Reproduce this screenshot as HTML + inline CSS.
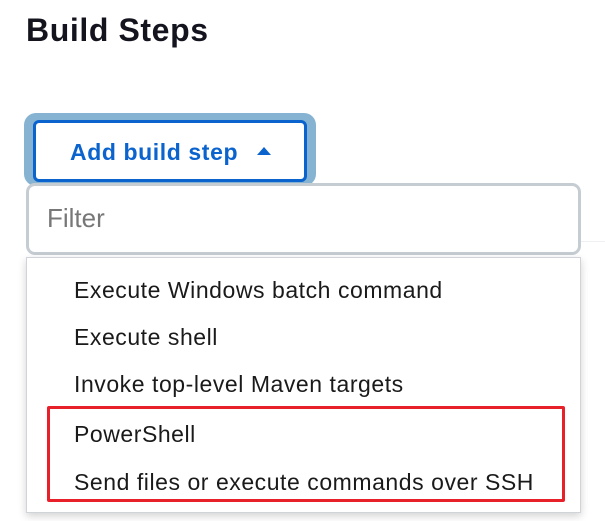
<!DOCTYPE html>
<html><head><style>
body{margin:0;width:605px;height:521px;background:#fff;font-family:"Liberation Sans",sans-serif;position:relative;overflow:hidden}
.a{position:absolute}
h1{position:absolute;left:26px;top:12px;margin:0;font-size:32px;letter-spacing:0.6px;font-weight:bold;color:#14141f}
.it{position:absolute;left:74px;font-size:23px;letter-spacing:0.55px;color:#1a1a1a;line-height:28px}
</style></head><body>
<h1>Build Steps</h1>
<div class="a" style="left:24px;top:113px;width:292px;height:73px;background:#86b3d1;border-radius:12px"></div>
<div class="a" style="left:33px;top:120px;width:268px;height:56px;background:#fff;border:3px solid #0b63ce;border-radius:6px"></div>
<div class="a" style="left:70px;top:137px;font-size:23px;letter-spacing:0.6px;font-weight:bold;color:#0b63ce;line-height:30px">Add build step</div>
<svg class="a" style="left:256px;top:146px" width="16" height="10"><polygon points="1,9 8,1 15,9" fill="#0b63ce"/></svg>
<div class="a" style="left:580px;top:241px;width:25px;height:1px;background:#eef0f3"></div>
<div class="a" style="left:26px;top:183px;width:549px;height:66px;background:#fff;border:3px solid #c5cdd3;border-radius:9px"></div>
<div class="a" style="left:47px;top:203px;font-size:26px;color:#777;line-height:30px">Filter</div>
<div class="a" style="left:26px;top:257px;width:553px;height:254px;background:#fff;border:1px solid #d0d4d8;box-shadow:0 3px 8px rgba(0,0,0,.18)"></div>
<div class="it" style="top:276px">Execute Windows batch command</div>
<div class="it" style="top:323px">Execute shell</div>
<div class="it" style="top:370px">Invoke top-level Maven targets</div>
<div class="it" style="top:420px">PowerShell</div>
<div class="it" style="top:468px">Send files or execute commands over SSH</div>
<div class="a" style="left:47px;top:406px;width:512px;height:90px;border:3px solid #e8202a;border-radius:2px"></div>
</body></html>
